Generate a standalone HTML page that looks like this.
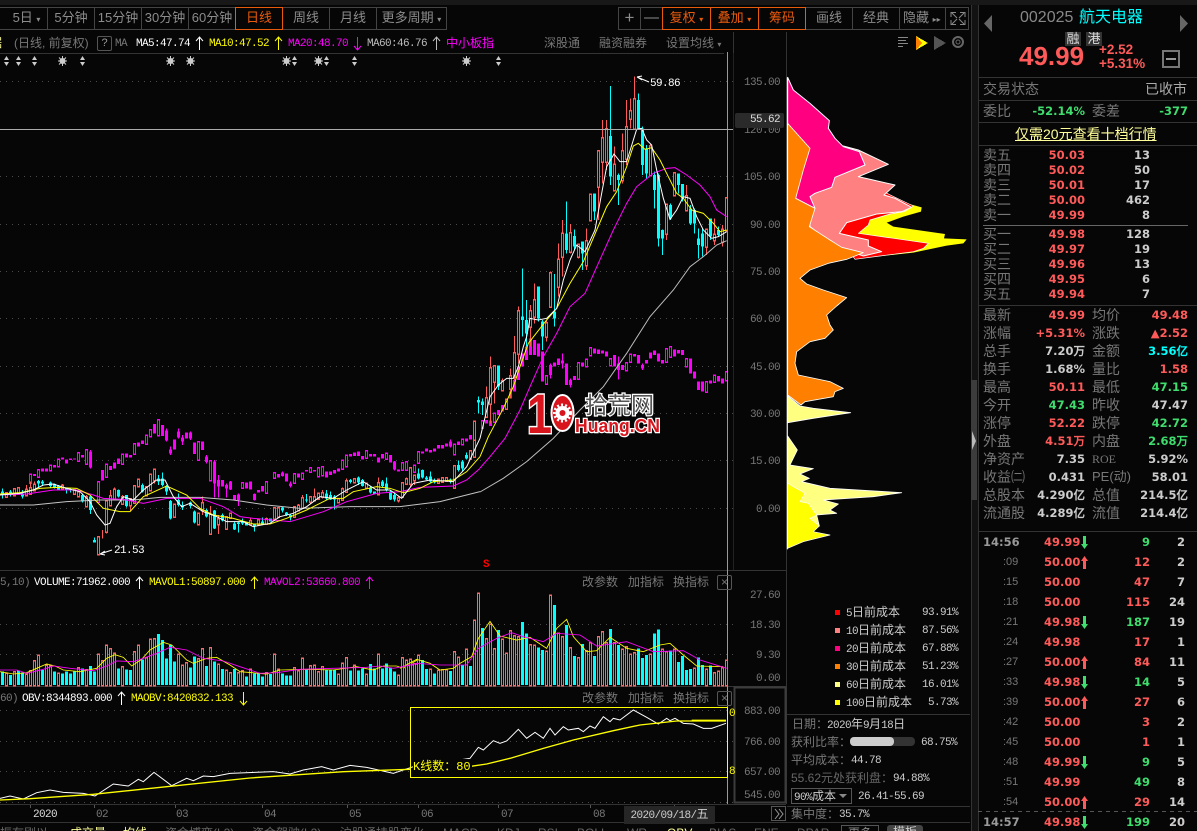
<!DOCTYPE html>
<html lang="zh"><head><meta charset="utf-8"><title>航天电器 002025</title>
<style>
html,body{margin:0;padding:0;background:#060606}
#p{position:relative;width:1197px;height:831px;overflow:hidden;background:#060606;font-family:"Liberation Sans","WenQuanYi Zen Hei","Noto Sans CJK SC",sans-serif;color:#888}
#p svg{position:absolute;left:0;top:0}
.t{position:absolute;white-space:nowrap;line-height:16px;height:16px;font-size:13px}
.m{font-family:"Liberation Mono","WenQuanYi Zen Hei",monospace;font-size:11px;letter-spacing:-.6px;margin-top:1px}
.a{margin-top:2px}
.m i{font-style:normal;font-size:12px;letter-spacing:0}
.b{font-family:"DejaVu Sans","WenQuanYi Zen Hei",sans-serif;font-weight:bold;font-size:11.5px}
.l{font-size:14px;color:#777}
.r{color:#ff5a5a}.g{color:#3fdc6e}.w{color:#ccc}.y{color:#ff0}.f{color:#f0f}.c{color:#0ff}
.btn{position:absolute;top:7px;height:21px;line-height:20px;border:1px solid #444;text-align:center;font-size:13px;color:#8c8c8c;box-sizing:content-box;white-space:nowrap}
.o{border:1px solid #e85a0c;color:#e85a0c;z-index:2}
.x{position:absolute;width:13px;height:13px;border:1px solid #555;border-radius:2px;color:#777;font-size:12px;line-height:13px;text-align:center}
</style></head><body><div id="p">
<div style="position:absolute;left:0;top:0;width:1197px;height:5px;background:#181818"></div>
<div style="position:absolute;left:971px;top:5px;width:6px;height:826px;background:#121212;border-left:1px solid #333;border-right:1px solid #333"></div>
<div style="position:absolute;left:971px;top:380px;width:6px;height:120px;background:#3c3c3c"></div>

<svg width="1197" height="831" viewBox="0 0 1197 831" fill="none">
<defs><clipPath id="cp"><rect x="0" y="54" width="727" height="516"/></clipPath>
<path id="a1" d="M295.5 413V462M319.5 305V395M331.5 290V315M343.5 270V295M367.5 292V310M391.5 298V315M403.5 260V308M415.5 240V258M439.5 262V285M451.5 225V270M463.5 210V240M523.5 315V350M595.5 342V372M607.5 310V330M631.5 345V400M655.5 358V372M679.5 352V385M691.5 342V352M751.5 365V372M775.5 362V372M799.5 358V370M823.5 325V355M835.5 325V350M883.5 322V350M895.5 318V330M907.5 295V322M931.5 292V305M943.5 292V300M955.5 282V295M967.5 280V290M1015.5 298V306M1027.5 268V298M1039.5 245V275M1063.5 238V246M1099.5 252V262M1135.5 250V282M1195.5 295V300M1207.5 250V290M1219.5 238V250M1231.5 205V250M1243.5 228V240M1315.5 240V248M1327.5 235V245M1339.5 235V242M1363.5 200V262M1411.5 155V175M1423.5 68V170M19.5 280V290M43.5 268V285M55.5 265V280M79.5 270V285M91.5 265V280M103.5 255V270M187.5 258V266M223.5 272V280M235.5 278V288M259.5 292V318"/>
<path id="a2" d="M769.5 385V480M757.5 480V515M733.5 495V510M709.5 480V530M649.5 380V420M613.5 310V375M589.5 405V490M541.5 230V315M493.5 88V175M481.5 125V145M469.5 172V265M457.5 245V330M433.5 285V360M409.5 178V275M397.5 205V275M385.5 245V350M361.5 375V450M349.5 515V585M325.5 525V560M301.5 490V545M277.5 492V560M265.5 570V650M241.5 610V710M229.5 760V800M193.5 692V740M181.5 725V770M145.5 725V850M133.5 850V920M121.5 920V955M109.5 990V1015M97.5 935V960M73.5 890V935M61.5 895V1000M49.5 985V1040M13.5 1056V1108"/>
<path id="a3" d="M91.5 225V248M115.5 212V230M151.5 198V210M175.5 180V198M235.5 160V182M259.5 152V190M295.5 248V305M319.5 195V230M367.5 165V190M403.5 133V160M439.5 108V130M451.5 92V108M475.5 62V105M595.5 128V178M631.5 185V240M727.5 250V262M799.5 248V278M823.5 220V232M883.5 224V248M907.5 222V235M931.5 205V215M955.5 205V228M967.5 202V225M1027.5 183V205M1039.5 168V198M1099.5 155V172M1159.5 162V175M1207.5 190V208M1219.5 188V208M1243.5 198V215M1255.5 158V188M1363.5 135V162M1387.5 120V132"/>
<path id="a4" d="M769.5 908V930M733.5 918V935M709.5 938V965M649.5 868V888M589.5 838V875M601.5 832V860M481.5 855V875M469.5 880V900M421.5 868V885M361.5 835V855M349.5 870V888M325.5 880V925M229.5 920V940M73.5 1032V1055M37.5 1055V1072"/>
<path id="a5" d="M19.5 342V375M43.5 338V375M79.5 345V375M91.5 335V375M103.5 305V375M115.5 288V375M139.5 318V375M151.5 320V375M175.5 342V375M235.5 325V375M259.5 332V375M295.5 285V375M307.5 305V375M319.5 258V375M331.5 268V375M343.5 282V375M367.5 322V375M403.5 278V375M415.5 258V375M439.5 295V375M451.5 240V375M463.5 238V375M535.5 285V375M547.5 318V375M559.5 310V375M595.5 298V375M607.5 268V375M631.5 265V375M655.5 315V375M679.5 333V375M691.5 340V375M715.5 340V375M727.5 335V375M751.5 330V375M799.5 340V375M823.5 285V375M835.5 330V375M883.5 325V375M895.5 335V375M907.5 297V375M931.5 320V375M943.5 318V375M955.5 338V375M967.5 322V375M1015.5 345V375M1027.5 312V375M1039.5 295V375M1063.5 318V375M1099.5 345V375M1135.5 285V375M1195.5 348V375"/>
<path id="a6" d="M7.5 295V375M19.5 303V375M31.5 300V375M43.5 313V375M55.5 288V375M91.5 330V375M115.5 333V375M127.5 332V375M139.5 332V375M163.5 277V375M175.5 294V375M199.5 270V375M223.5 183V375M235.5 102V375M259.5 238V375M271.5 195V375M283.5 268V375M307.5 240V375M319.5 282V375M331.5 215V375M343.5 230V375M355.5 232V375M391.5 256V375M403.5 258V375M439.5 276V375M451.5 108V375M475.5 222V375M487.5 232V375M511.5 265V375M535.5 295V375M559.5 275V375M571.5 250V375M595.5 232V375M607.5 217V375M619.5 250V375M643.5 250V375M667.5 270V375M679.5 262V375M691.5 285V375M703.5 280V375M751.5 285V375M787.5 270V375M799.5 278V375M823.5 270V375M883.5 327V375M919.5 330V375M943.5 340V375M955.5 336V375M967.5 325V375M979.5 303V375"/>
</defs>

<!-- grid -->
<g stroke="#4a4a4a" stroke-dasharray="1 5">
<path d="M0 81.5H733M0 176.5H733M0 224.5H733M0 271.5H733M0 318.5H733M0 366.5H733M0 413.5H733M0 460.5H733M0 508.5H733M0 624.5H733M0 654.5H733M0 710.5H733M0 741.5H733M0 771.5H733M0 802.5H733"/>
</g>

<!-- panel lines -->
<g stroke="#333" shape-rendering="crispEdges">
<path d="M733.5 53V570" stroke="#222"/>
<path d="M0 53.5H724M733.5 32V53M786.5 32V804M0 570.5H786M0 686.5H786M0 804.5H786M0 822.5H970M787 714.5H970M787 806.5H970"/>
<path d="M734.5 687.5H785.5V802.5H734.5Z" stroke="#3c3c3c" stroke-width="2"/>
<path d="M978 77.5H1197M978 100.5H1197M978 122.5H1197M978 145.5H1197M978 305.5H1197M978 531.5H1197"/>
<path d="M983 225.5H1188" stroke="#666"/>
<path d="M978 811.5H1197" stroke="#555" stroke-dasharray="4 4"/>
<path d="M30.5 805V808M94.5 805V808M175.5 805V808M262.5 805V808M347.5 805V808M418.5 805V808M498.5 805V808M590.5 805V808M674.5 805V808" stroke="#555"/>
</g>
<path d="M727.5 52V804" stroke="#999" shape-rendering="crispEdges"/>

<g clip-path="url(#cp)">
<!-- index candles left -->
<g transform="matrix(.333333 0 0 .333333 0 400)" shape-rendering="crispEdges">
<path stroke="#f0f" stroke-width="3" d="M271.5 150V205M655.5 225V292M679.5 250V292M691.5 243V270M715.5 280V318M763.5 280V302M1183.5 183V212M1351.5 118V142M511.5 140V165M535.5 85V115M547.5 105V135M571.5 95V120M619.5 165V190M847.5 215V230M871.5 245V262M499.5 85V125M643.5 180V292"/>
<path stroke="#f0f" stroke-width="9" d="M103.5 222V228M127.5 205V215M139.5 205V215M163.5 195V202M187.5 172V178M199.5 178V190M211.5 176V180M223.5 175V178M247.5 165V172M271.5 155V202M307.5 210V242M331.5 198V210M343.5 188V205M355.5 175V192M379.5 160V172M391.5 165V172M415.5 128V140M427.5 122V132M463.5 72V100M487.5 75V108M499.5 92V122M511.5 148V160M523.5 118V148M535.5 95V112M547.5 112V125M559.5 98V115M571.5 97V115M583.5 128V162M607.5 125V150M619.5 170V186M643.5 185V250M655.5 240V260M667.5 240V260M679.5 255V265M691.5 245V268M703.5 285V300M715.5 283V300M739.5 248V265M751.5 245V268M763.5 282V300M775.5 270V278M787.5 258V275M835.5 222V232M847.5 218V228M859.5 220V245M871.5 250V258M895.5 220V232M919.5 210V215M943.5 210V215M979.5 215V232M991.5 215V225M1003.5 210V220M1015.5 205V215M1051.5 162V170M1063.5 158V168M1075.5 155V168M1087.5 168V178M1111.5 162V170M1123.5 162V170M1135.5 172V188M1147.5 162V175M1171.5 165V188M1183.5 185V208M1195.5 208V214M1231.5 210V218M1267.5 155V160M1279.5 145V155M1291.5 150V158M1303.5 145V155M1315.5 135V145M1327.5 135V145M1339.5 130V140M1351.5 125V140M1375.5 125V135M1399.5 115V125M1411.5 105V118"/>
<use href="#a3" stroke="#f0f" stroke-width="9" stroke-linecap="square"/>
<use href="#a3" stroke="#060606" stroke-width="3"/>
</g>
<!-- index candles right -->
<g transform="matrix(.333333 0 0 .333333 470 70)" shape-rendering="crispEdges">
<path stroke="#f0f" stroke-width="3" d="M445.5 860V928M517.5 880V900M277.5 850V895M241.5 880V925M301.5 925V952"/>
<path stroke="#f0f" stroke-width="9" d="M49.5 1050V1060M61.5 1052V1068M85.5 1020V1035M97.5 1005V1025M109.5 990V1012M121.5 965V985M133.5 930V965M145.5 890V930M157.5 850V890M169.5 830V870M181.5 805V855M193.5 810V855M205.5 820V860M217.5 845V935M241.5 885V915M253.5 878V890M265.5 865V885M277.5 872V880M289.5 880V945M301.5 930V945M313.5 918V930M337.5 878V890M373.5 835V850M385.5 838V852M397.5 842V850M409.5 845V860M433.5 855V890M445.5 880V900M457.5 885V900M493.5 852V860M505.5 855V880M517.5 885V895M529.5 870V880M541.5 848V865M553.5 842V855M565.5 850V875M577.5 870V880M613.5 838V860M625.5 840V850M637.5 840V855M661.5 865V910M673.5 905V925M685.5 935V960M697.5 935V965M721.5 932V940M745.5 918V935M757.5 925V940"/>
<use href="#a4" stroke="#f0f" stroke-width="9" stroke-linecap="square"/>
<use href="#a4" stroke="#060606" stroke-width="3"/>
</g>

<!-- stock candles left -->
<g transform="matrix(.333333 0 0 .333333 0 400)" shape-rendering="crispEdges">
<path stroke="#ff5a5a" stroke-width="3" d="M19.5 278V292M43.5 265V288M55.5 262V282M79.5 255V290M91.5 245V285M103.5 245V272M187.5 252V270M223.5 270V282M235.5 275V290M259.5 285V320M295.5 410V465M307.5 390V415M319.5 300V400M331.5 270V320M343.5 262V298M367.5 285V315M391.5 295V335M403.5 258V310M415.5 235V260M439.5 260V290M451.5 222V275M463.5 205V250M523.5 312V352M595.5 340V375M607.5 290V345M631.5 318V402M655.5 345V402M679.5 350V388M691.5 340V355M751.5 352V374M775.5 360V375M799.5 352V372M823.5 322V358M835.5 322V352M883.5 318V352M895.5 312V332M907.5 285V325M931.5 290V310M943.5 265V302M955.5 278V300M967.5 270V295M1015.5 295V308M1027.5 262V300M1039.5 235V278M1063.5 235V248M1099.5 250V265M1135.5 232V285M1195.5 290V308M1207.5 248V292M1219.5 232V252M1231.5 202V260M1243.5 225V255M1315.5 238V250M1327.5 232V248M1339.5 232V245M1363.5 198V264M1411.5 150V180M1423.5 65V172"/>
<use href="#a1" stroke="#ff5a5a" stroke-width="9" stroke-linecap="square"/>
<use href="#a1" stroke="#060606" stroke-width="3"/>
<path stroke="#0ff" stroke-width="3" d="M7.5 265V295M31.5 270V290M67.5 270V295M115.5 240V262M127.5 240V258M151.5 245V262M163.5 250V265M175.5 255V272M199.5 262V280M211.5 265V278M247.5 280V308M271.5 285V342M283.5 412V428M355.5 268V292M379.5 285V322M427.5 250V278M475.5 225V255M487.5 217V260M499.5 255V285M511.5 300V358M535.5 280V320M547.5 305V330M571.5 305V325M583.5 332V370M619.5 325V352M643.5 330V387M667.5 340V365M703.5 365V390M715.5 365V398M727.5 355V375M763.5 370V395M787.5 352V372M847.5 320V338M859.5 336V348M871.5 342V362M919.5 282V308M979.5 270V300M991.5 275V300M1003.5 285V328M1051.5 237V250M1075.5 230V255M1087.5 237V260M1111.5 258V280M1147.5 240V262M1159.5 232V275M1171.5 272V300M1183.5 280V305M1255.5 205V238M1267.5 208V235M1279.5 228V240M1291.5 215V248M1303.5 235V250M1351.5 235V250M1375.5 182V215M1387.5 180V215M1399.5 158V178M1435.5 0V36"/>
<path stroke="#0ff" stroke-width="9" d="M7.5 275V285M31.5 275V285M67.5 280V290M115.5 243V250M127.5 245V250M151.5 248V258M163.5 252V262M175.5 258V268M199.5 265V270M211.5 268V272M247.5 285V305M271.5 290V330M283.5 420V428M355.5 270V290M379.5 285V318M427.5 255V275M475.5 235V245M487.5 235V255M499.5 258V275M511.5 303V355M535.5 300V315M547.5 315V322M571.5 308V318M583.5 335V368M619.5 330V350M643.5 332V385M667.5 345V362M703.5 370V388M715.5 368V372M727.5 365V370M739.5 368V376M763.5 372V378M787.5 365V370M811.5 355V365M847.5 322V332M859.5 338V345M871.5 345V352M919.5 298V302M979.5 280V295M991.5 285V298M1003.5 290V298M1051.5 240V246M1075.5 232V248M1087.5 240V258M1111.5 262V278M1123.5 275V282M1147.5 245V258M1159.5 250V272M1171.5 275V298M1183.5 285V298M1255.5 220V235M1267.5 210V232M1279.5 232V238M1291.5 230V245M1303.5 240V248M1351.5 238V246M1375.5 195V210M1387.5 185V205M1399.5 165V175"/>
</g>
<!-- stock candles right -->
<g transform="matrix(.333333 0 0 .333333 470 70)" shape-rendering="crispEdges">
<path stroke="#ff5a5a" stroke-width="3" d="M769.5 382V482M757.5 465V530M733.5 445V525M709.5 475V555M649.5 345V425M613.5 308V378M589.5 400V510M541.5 220V320M493.5 20V180M481.5 85V175M469.5 90V285M457.5 190V340M433.5 230V360M409.5 150V300M397.5 150V340M385.5 240V450M361.5 375V455M349.5 475V600M325.5 525V565M301.5 462V550M277.5 450V620M265.5 520V680M241.5 605V712M229.5 750V815M193.5 640V760M181.5 705V830M145.5 710V880M133.5 798V930M121.5 895V985M109.5 985V1020M97.5 925V965M73.5 885V1000M61.5 860V1060M49.5 950V1040M13.5 1056V1110"/>
<use href="#a2" stroke="#ff5a5a" stroke-width="9" stroke-linecap="square"/>
<use href="#a2" stroke="#060606" stroke-width="3"/>
<path stroke="#0ff" stroke-width="3" d="M745.5 470V500M721.5 445V510M697.5 475V560M685.5 475V565M673.5 415V490M661.5 405V465M637.5 342V395M625.5 310V370M601.5 400V450M577.5 478V555M565.5 310V530M553.5 305V415M529.5 225V325M517.5 170V315M505.5 70V180M445.5 310V405M421.5 48V345M373.5 370V450M337.5 515V600M313.5 478V540M289.5 395V550M253.5 612V770M217.5 750V840M205.5 650V755M169.5 690V830M157.5 595V800M85.5 887V960M37.5 985V1035M25.5 980V1030"/>
<path stroke="#0ff" stroke-width="9" d="M745.5 480V495M721.5 445V500M697.5 490V530M685.5 505V525M673.5 420V460M661.5 415V460M637.5 342V385M625.5 310V345M601.5 405V445M577.5 480V505M565.5 315V505M553.5 315V360M529.5 235V310M517.5 175V285M505.5 90V175M445.5 315V330M421.5 198V320M373.5 370V425M337.5 515V550M313.5 498V530M289.5 490V540M253.5 725V745M217.5 755V800M205.5 650V745M169.5 750V790M157.5 740V750M85.5 887V950M37.5 995V1005M25.5 990V997"/>
</g>

<!-- MA lines -->
<g transform="matrix(.333333 0 0 .333333 0 400)" stroke-width="3">
<path stroke="#c4c4c4" d="M0 315L100 315 200 305 300 300 400 300 480 292 600 292 700 300 800 315 900 325 1050 320 1200 320 1320 305 1440 275"/>
<path stroke="#f0f" d="M0 285L80 282 160 270 230 270 280 285 310 295 370 298 430 310 500 295 600 295 670 320 720 350 760 355 870 365 970 335 1040 305 1130 280 1200 275 1260 262 1360 258 1400 240 1440 205"/>
<path stroke="#ff0" d="M0 282L60 278 120 265 170 262 230 265 270 285 310 325 360 335 390 335 430 290 500 258 560 285 600 325 640 345 700 355 760 372 810 372 860 355 920 330 990 295 1030 295 1060 275 1130 260 1170 265 1210 278 1260 265 1300 245 1360 240 1400 215 1440 170"/>
<path stroke="#fff" d="M0 285L60 280 100 270 130 255 160 252 200 265 240 275 270 305 290 345 315 375 330 370 350 320 370 290 400 300 430 270 470 240 495 240 520 290 545 320 570 310 610 335 650 350 680 365 730 365 760 380 810 370 840 350 880 340 920 320 960 290 1000 295 1040 270 1090 245 1130 270 1170 270 1205 295 1240 250 1290 240 1360 245 1400 200 1440 115"/>
</g>
<g transform="matrix(.333333 0 0 .333333 470 70)" stroke-width="3">
<path stroke="#bdbdbd" d="M30 1266L100 1225 170 1175 250 1105 330 1020 400 950 470 850 540 740 610 660 660 590 700 560 740 525 770 512"/>
<path stroke="#f0f" d="M30 1194L60 1160 105 1105 150 1020 180 950 220 860 260 790 300 710 345 670 385 580 430 480 470 400 500 350 550 310 590 295 615 293 650 315 690 345 720 380 740 420 770 440"/>
<path stroke="#ff0" d="M30 1160L55 1100 100 1015 130 950 150 890 175 820 230 750 260 715 300 640 340 575 380 480 410 410 440 365 470 290 490 228 505 220 525 238 545 233 570 270 595 320 620 370 640 385 665 420 700 430 730 460 750 485 770 480"/>
<path stroke="#fff" d="M30 1105L60 980 85 945 110 925 130 925 145 890 160 830 170 800 180 745 205 750 230 745 260 715 280 630 300 570 320 525 345 545 375 480 395 370 410 290 432 252 450 275 470 275 490 210 500 178 515 175 530 210 545 225 560 300 580 385 600 448 620 420 640 380 660 385 680 440 700 480 725 505 745 500 770 485"/>
</g>
</g>

<!-- crosshair -->
<path d="M0 129.5H733" stroke="#aaa" shape-rendering="crispEdges"/>

<!-- hi/lo arrows -->
<g stroke="#fff"><path d="M637 77L649 82M637 77L642 76M637 77L642 80" /><path d="M100 554L112 550M100 554L105 551M100 554L105 555"/></g>

<!-- signal markers -->
<g fill="#ccc">
<path d="M6.5 56l2.5 4h-5zM6.5 66l2.5-4h-5zM18.5 56l2.5 4h-5zM18.5 66l2.5-4h-5zM34.5 56l2.5 4h-5zM34.5 66l2.5-4h-5zM82.5 56l2.5 4h-5zM82.5 66l2.5-4h-5zM294.5 56l2.5 4h-5zM294.5 66l2.5-4h-5zM326.5 56l2.5 4h-5zM326.5 66l2.5-4h-5zM354.5 56l2.5 4h-5zM354.5 66l2.5-4h-5zM498.5 56l2.5 4h-5zM498.5 66l2.5-4h-5z"/>
<g><circle cx="62.5" cy="61" r="3"/><circle cx="170.5" cy="61" r="3"/><circle cx="190.5" cy="61" r="3"/><circle cx="286.5" cy="61" r="3"/><circle cx="318.5" cy="61" r="3"/><circle cx="466.5" cy="61" r="3"/></g>
<path stroke="#ccc" d="M62.5 56V66M58 61H67M59 57.5L66 64.5M66 57.5L59 64.5M170.5 56V66M166 61H175M167 57.5L174 64.5M174 57.5L167 64.5M190.5 56V66M186 61H195M187 57.5L194 64.5M194 57.5L187 64.5M286.5 56V66M282 61H291M283 57.5L290 64.5M290 57.5L283 64.5M318.5 56V66M314 61H323M315 57.5L322 64.5M322 57.5L315 64.5M466.5 56V66M462 61H471M463 57.5L470 64.5M470 57.5L463 64.5"/>
</g>

<!-- legend arrows -->
<g fill="none">
<path stroke="#fff" d="M199.5 37V50M196 41L199.5 37 203 41M139.5 577V589M136 581L139.5 577 143 581M121.5 692V705M118 696L121.5 692 125 696"/>
<path stroke="#ff0" d="M278.5 37V50M275 41L278.5 37 282 41M254.5 577V589M251 581L254.5 577 258 581M243.5 692V705M240 701L243.5 705 247 701"/>
<path stroke="#f0f" d="M357.5 37V50M354 46L357.5 50 361 46M369.5 577V589M366 581L369.5 577 373 581"/>
<path stroke="#bbb" d="M436.5 37V50M433 41L436.5 37 440 41"/>
</g>

<!-- Volume bars left -->
<g transform="matrix(.333333 0 0 .333333 0 560)" shape-rendering="crispEdges">
<use href="#a5" stroke="#f06c6c" stroke-width="9" stroke-linecap="square"/>
<use href="#a5" stroke="#060606" stroke-width="3"/>
<path stroke="#0ff" stroke-width="9" d="M7.5 335V375M31.5 345V375M55.5 332V375M67.5 338V375M127.5 330V375M163.5 335V375M187.5 340V375M199.5 335V375M211.5 340V375M223.5 335V375M247.5 325V375M271.5 318V375M283.5 335V375M355.5 325V375M379.5 328V375M391.5 330V375M427.5 298V375M475.5 222V375M487.5 240V375M499.5 295V375M511.5 255V375M523.5 305V375M571.5 322V375M583.5 290V375M619.5 318V375M643.5 305V375M667.5 327V375M703.5 327V375M739.5 350V375M763.5 340V375M775.5 340V375M787.5 350V375M811.5 342V375M847.5 340V375M859.5 347V375M871.5 347V375M919.5 328V375M979.5 330V375M991.5 328V375M1003.5 330V375M1051.5 332V375M1075.5 332V375M1087.5 325V375M1111.5 312V375M1123.5 325V375M1147.5 325V375M1159.5 310V375M1171.5 322V375M1183.5 335V375"/>
<path stroke="#ff0" stroke-width="2.6" fill="none" shape-rendering="auto" d="M0 335L40 342 80 338 110 325 140 312 165 318 190 330 240 335 290 325 320 295 345 284 370 292 395 318 425 298 450 270 490 247 515 255 560 300 580 310 620 295 650 292 690 315 720 335 800 342 840 330 920 328 1000 330 1070 320 1120 330 1150 318 1190 318 1210 325 1260 295"/>
<path stroke="#f0f" stroke-width="2.6" fill="none" shape-rendering="auto" d="M0 330L50 330 80 340 130 328 160 318 210 325 280 332 320 318 350 303 400 305 430 295 470 280 510 262 560 270 610 295 670 303 720 320 780 340 830 338 900 328 1000 325 1100 322 1140 318 1180 325 1220 318 1260 312"/>
</g>
<!-- Volume bars right -->
<g transform="matrix(.333333 0 0 .333333 400 560)" shape-rendering="crispEdges">
<use href="#a6" stroke="#f06c6c" stroke-width="9" stroke-linecap="square"/>
<use href="#a6" stroke="#060606" stroke-width="3"/>
<path stroke="#0ff" stroke-width="9" d="M67.5 300V375M79.5 327V375M103.5 340V375M151.5 333V375M187.5 315V375M211.5 318V375M247.5 204V375M295.5 210V375M367.5 186V375M379.5 220V375M415.5 262V375M427.5 270V375M463.5 135V375M499.5 195V375M523.5 288V375M547.5 252V375M583.5 288V375M631.5 207V375M655.5 255V375M715.5 265V375M727.5 294V375M739.5 285V375M763.5 220V375M775.5 208V375M811.5 272V375M835.5 306V375M847.5 288V375M859.5 330V375M871.5 327V375M895.5 292V375M907.5 315V375M931.5 316V375"/>
<path stroke="#ff0" stroke-width="2.6" fill="none" shape-rendering="auto" d="M0 325L50 298 90 310 120 330 160 325 180 310 215 290 235 235 270 184 300 228 350 240 390 232 440 265 470 205 500 178 520 230 560 275 590 272 630 232 680 265 730 275 780 255 810 250 850 285 890 318 970 320"/>
<path stroke="#f0f" stroke-width="2.6" fill="none" shape-rendering="auto" d="M0 322L50 310 120 315 200 315 235 265 290 235 335 218 370 230 430 245 470 220 540 225 590 258 680 245 760 275 850 272 900 300 980 325"/>
</g>

<!-- OBV -->
<g transform="matrix(.333333 0 0 .333333 0 560)" stroke-width="3" fill="none">
<path stroke="#fff" d="M0 715L30 708 70 717 110 698 150 690 190 697 250 700 285 708 340 672 385 678 415 658 430 665 462 637 515 677 560 655 580 662 610 648 640 650 690 640 820 635 870 642 910 630 965 620 1000 630 1050 616 1100 622 1180 640 1240 620"/>
<path stroke="#ff0" stroke-width="4" d="M0 720L90 716 280 703 500 680 750 654 1030 635 1230 628"/>
</g>
<g transform="matrix(.333333 0 0 .333333 400 560)" stroke-width="3" fill="none">
<path stroke="#fff" d="M165 602L190 598 210 595 235 562 250 570 280 542 300 550 320 543 355 508 380 535 405 517 430 535 450 505 465 525 490 500 505 510 535 505 550 515 570 498 585 505 610 470 630 485 640 475 660 480 700 450 740 472 775 492 800 475 810 482 825 475 850 490 880 492 910 505 935 505 978 490"/>
<path stroke="#ff0" stroke-width="4" d="M205 620L260 612 330 595 430 565 520 540 640 512 720 495 830 483 978 483M875 481H978"/>
</g>
<rect x="410.5" y="707.5" width="317" height="70" fill="none" stroke="#ff0" shape-rendering="crispEdges"/>

<!-- chip distribution -->
<g transform="matrix(.333333 0 0 .333333 780 70)" stroke-linejoin="round">
<path fill="#ff0" d="M330 380L388 402 425 412 423 425 370 440 320 458 340 470 495 492 492 505 560 508 550 520 500 527 400 548 230 566 100 400Z"/>
<path fill="#f00" stroke="#fff" stroke-width="2" d="M300 360L400 408 372 425 330 432 270 450 265 465 235 490 445 520 430 535 400 545 300 558 225 568 120 420Z"/>
<path fill="#ff8080" stroke="#fff" stroke-width="3" d="M190 228L235 240 325 283 235 320 345 345 312 375 345 385 395 412 365 425 290 432 200 458 178 490 265 510 265 528 305 545 250 558 170 530 90 470 90 380Z"/>
<path fill="#ff0080" stroke="#fff" stroke-width="3" d="M23 22L40 60 90 100 148 152 145 175 165 205 190 230 238 245 255 285 165 322 155 352 105 370 90 380 105 415 47 385 23 300Z"/>
<path fill="#ff8000" stroke="#fff" stroke-width="2.5" d="M23 160L90 235 70 300 47 385 105 415 88 470 150 510 185 532 250 548 200 568 145 580 90 600 60 625 80 642 130 660 200 683 170 708 140 735 150 765 160 780 135 805 90 815 50 845 45 880 55 915 150 935 190 955 165 965 160 980 75 995 63 1005 23 975Z"/>
<path fill="#ffff80" stroke="#fff" stroke-width="2.5" d="M23 978L60 1008 100 1015 212 1028 100 1045 23 1058ZM23 1098L52 1140 30 1185 100 1196 60 1212 88 1225 65 1235 150 1255 365 1268 280 1280 130 1290 175 1302 150 1320 170 1330 110 1335 118 1368 60 1400 23 1420Z"/>
<path fill="#ff0" stroke="#fff" stroke-width="2" d="M23 1240L75 1270 60 1295 85 1300 110 1335 90 1345 118 1368 100 1385 150 1395 70 1415 23 1435Z"/>
<path stroke="#fff" stroke-width="3" d="M22 22V1438"/>
</g>

<!-- chip toolbar icons -->
<g shape-rendering="crispEdges">
<path stroke="#888" d="M898 37.5H908M898 40.5H906M898 43.5H908M898 46.5H903"/>
<path fill="#ff8000" d="M916 36V50L922 43Z"/><path fill="#ff0" d="M916 36L928 43 916 50 922 43Z"/>
<path fill="#555" d="M934 36V50L946 43Z"/>
</g>
<circle cx="958" cy="42" r="5" stroke="#666" stroke-width="2"/><circle cx="958" cy="42" r="2" stroke="#666"/>
<!-- fullscreen icon -->
<path stroke="#888" d="M951 17V12.5H956M960 12.5H965V17M951 20V24.5H956M960 24.5H965V20M952 13L957 18M964 13L959 18M952 24L957 19M964 24L959 19"/>
<!-- scroll handle arrow -->
<path fill="#bbb" d="M972 431L976 441 972 450Z"/>
<!-- right panel triangles -->
<path fill="#666" d="M992 15V32L984 23.5ZM1180 15V32L1188 23.5Z"/>
<!-- minus box -->
<rect x="1163" y="51" width="16" height="16" stroke="#777" stroke-width="2"/><path d="M1166 59H1176" stroke="#999" stroke-width="2"/>
<!-- sq legend -->
<g shape-rendering="crispEdges">
<rect x="835" y="610" width="5" height="5" fill="#f00"/><rect x="835" y="628" width="5" height="5" fill="#ff8080"/><rect x="835" y="646" width="5" height="5" fill="#ff0080"/><rect x="835" y="664" width="5" height="5" fill="#ff8000"/><rect x="835" y="682" width="5" height="5" fill="#ffff80"/><rect x="835" y="700" width="5" height="5" fill="#ff0"/>
</g>
<rect x="850" y="737" width="65" height="9" rx="4" fill="#333"/><rect x="850" y="737" width="44" height="9" rx="4" fill="#ccc"/>
<rect x="791.5" y="788.5" width="60" height="15" stroke="#555"/>
<path fill="#888" d="M839 794h8l-4 4z"/>
<path stroke="#555" d="M771.5 806.5h14v14h-14z"/><path stroke="#999" d="M775 809l4 5-4 5M779 809l4 5-4 5"/>

<!-- trade arrows -->
<g stroke-width="3" fill="#3fdc6e">
<path stroke="#3fdc6e" d="M1084.5 536V546M1084.5 616V626M1084.5 676V686M1084.5 756V766M1084.5 816V826"/>
<path stroke="none" d="M1081 544H1088L1084.5 549ZM1081 624H1088L1084.5 629ZM1081 684H1088L1084.5 689ZM1081 764H1088L1084.5 769ZM1081 824H1088L1084.5 829Z"/>
</g>
<g stroke-width="3" fill="#ff5a5a">
<path stroke="#ff5a5a" d="M1084.5 560V569M1084.5 660V669M1084.5 700V709M1084.5 800V809"/>
<path stroke="none" d="M1081 561H1088L1084.5 556ZM1081 661H1088L1084.5 656ZM1081 701H1088L1084.5 696ZM1081 801H1088L1084.5 796Z"/>
</g>

<!-- watermark -->
<g>
<text x="527" y="433" font-family="Liberation Sans" font-weight="bold" font-size="56" textLength="25" lengthAdjust="spacingAndGlyphs" fill="#d8141c" stroke="#fff" stroke-width="3" paint-order="stroke">1</text>
<ellipse cx="562.5" cy="413" rx="11" ry="18" fill="#d8141c" stroke="#fff" stroke-width="2"/>
<circle cx="562.5" cy="413" r="7" fill="#fff"/><circle cx="562.5" cy="413" r="8" fill="none" stroke="#fff" stroke-width="3" stroke-dasharray="2 2"/><circle cx="562.5" cy="413" r="3" fill="#d8141c"/>
<text x="585" y="413" font-family="WenQuanYi Zen Hei,Noto Sans CJK SC,sans-serif" font-size="23" fill="#555" stroke="#fff" stroke-width="2.5" paint-order="stroke">拾荒网</text>
<text x="575" y="432" font-family="Liberation Sans" font-size="18" font-weight="bold" textLength="85" lengthAdjust="spacingAndGlyphs" fill="#d8141c" stroke="#fff" stroke-width="2.5" paint-order="stroke">Huang.CN</text>
</g>
</svg>

<!-- toolbar -->
<div class="btn" style="left:-1px;width:47px;text-indent:6px"><span>5日 <span style="font-size:8px">▾</span></span></div>
<div class="btn" style="left:47px;width:46px">5分钟</div>
<div class="btn" style="left:94px;width:46px">15分钟</div>
<div class="btn" style="left:141px;width:46px">30分钟</div>
<div class="btn" style="left:188px;width:46px">60分钟</div>
<div class="btn o" style="left:235px;width:46px">日线</div>
<div class="btn" style="left:282px;width:46px">周线</div>
<div class="btn" style="left:329px;width:46px">月线</div>
<div class="btn" style="left:376px;width:69px">更多周期 <span style="font-size:8px">▾</span></div>
<div class="btn" style="left:618px;width:21px;font-size:17px">+</div>
<div class="btn" style="left:640px;width:21px;font-size:15px">—</div>
<div class="btn o" style="left:662px;width:47px">复权 <span style="font-size:8px">▾</span></div>
<div class="btn o" style="left:710px;width:47px">叠加 <span style="font-size:8px">▾</span></div>
<div class="btn o" style="left:758px;width:46px">筹码</div>
<div class="btn" style="left:805px;width:46px">画线</div>
<div class="btn" style="left:852px;width:46px">经典</div>
<div class="btn" style="left:899px;width:45px;text-align:left;text-indent:3px">隐藏 <span style="font-size:8px">▸▸</span></div>
<div class="btn" style="left:945px;width:22px"></div>

<!-- row 2 -->
<span class="t" style="left:-10px;top:35px;font-size:12px;color:#ffff99">据</span>
<span class="t" style="left:14px;top:35px;font-size:12px;color:#777">(日线, 前复权)</span>
<span class="t" style="left:97px;top:36px;width:13px;height:13px;line-height:13px;border:1px solid #555;border-radius:2px;text-align:center;font-size:11px;color:#999">?</span>
<span class="t m" style="left:115px;top:35px;color:#777">MA</span>
<span class="t m" style="left:136px;top:35px;color:#fff">MA5:47.74</span>
<span class="t m y" style="left:209px;top:35px">MA10:47.52</span>
<span class="t m f" style="left:288px;top:35px">MA20:48.70</span>
<span class="t m" style="left:367px;top:35px;color:#bbb">MA60:46.76</span>
<span class="t f" style="left:446px;top:35px;font-size:12px">中小板指</span>
<span class="t" style="left:544px;top:35px;font-size:12px;color:#777">深股通</span>
<span class="t" style="left:599px;top:35px;font-size:12px;color:#777">融资融券</span>
<span class="t" style="left:666px;top:35px;font-size:12px;color:#777">设置均线 <span style="font-size:8px">▾</span></span>

<!-- axis main -->
<span class="t m a" style="right:417px;top:73px;color:#777">135.00</span>
<span class="t m a" style="right:417px;top:121px;color:#777">120.00</span>
<span class="t m a" style="right:417px;top:168px;color:#777">105.00</span>
<span class="t m a" style="right:417px;top:216px;color:#777">90.00</span>
<span class="t m a" style="right:417px;top:263px;color:#777">75.00</span>
<span class="t m a" style="right:417px;top:310px;color:#777">60.00</span>
<span class="t m a" style="right:417px;top:358px;color:#777">45.00</span>
<span class="t m a" style="right:417px;top:405px;color:#777">30.00</span>
<span class="t m a" style="right:417px;top:452px;color:#777">15.00</span>
<span class="t m a" style="right:417px;top:500px;color:#777">0.00</span>
<span class="t m" style="left:735px;top:113px;margin-top:0;width:45px;height:15px;line-height:15px;padding-right:4px;text-align:right;background:#2a2a2a;border-radius:2px;color:#ddd">55.62</span>
<span class="t m" style="left:650px;top:75px;color:#fff">59.86</span>
<span class="t m" style="left:114px;top:542px;color:#fff">21.53</span>
<span class="t m" style="left:483px;top:556px;color:#f00;font-weight:bold">S</span>

<!-- volume header -->
<span class="t m" style="left:0;top:574px;color:#777">5,10)</span>
<span class="t m" style="left:34px;top:574px;color:#fff">VOLUME:71962.000</span>
<span class="t m y" style="left:149px;top:574px">MAVOL1:50897.000</span>
<span class="t m f" style="left:264px;top:574px">MAVOL2:53660.800</span>
<span class="t" style="left:582px;top:574px;font-size:12px;color:#777">改参数</span>
<span class="t" style="left:628px;top:574px;font-size:12px;color:#777">加指标</span>
<span class="t" style="left:673px;top:574px;font-size:12px;color:#777">换指标</span>
<span class="x" style="left:717px;top:575px">×</span>
<span class="t m a" style="right:417px;top:586px;color:#777">27.60</span>
<span class="t m a" style="right:417px;top:616px;color:#777">18.30</span>
<span class="t m a" style="right:417px;top:646px;color:#777">9.30</span>
<span class="t m a" style="right:417px;top:669px;color:#777">0.00</span>

<!-- OBV header -->
<span class="t m" style="left:0;top:690px;color:#777">60)</span>
<span class="t m" style="left:22px;top:690px;color:#fff">OBV:8344893.000</span>
<span class="t m y" style="left:131px;top:690px">MAOBV:8420832.133</span>
<span class="t" style="left:582px;top:690px;font-size:12px;color:#777">改参数</span>
<span class="t" style="left:628px;top:690px;font-size:12px;color:#777">加指标</span>
<span class="t" style="left:673px;top:690px;font-size:12px;color:#777">换指标</span>
<span class="x" style="left:717px;top:691px">×</span>
<span class="t m a" style="right:417px;top:702px;color:#777">883.00</span>
<span class="t m a" style="right:417px;top:733px;color:#777">766.00</span>
<span class="t m a" style="right:417px;top:763px;color:#777">657.00</span>
<span class="t m a" style="right:417px;top:786px;color:#777">545.00</span>
<span class="t y" style="left:413px;top:759px;font-size:12px;background:#060606;padding-right:1px;font-family:'Liberation Mono','WenQuanYi Zen Hei',monospace">K线数：80</span>
<span class="t m y" style="left:729px;top:705px">0</span>
<span class="t m y" style="left:729px;top:763px">8</span>

<!-- dates -->
<span class="t m" style="left:33px;top:806px;color:#ddd">2020</span>
<span class="t m" style="left:96px;top:806px;color:#777">02</span>
<span class="t m" style="left:176px;top:806px;color:#777">03</span>
<span class="t m" style="left:264px;top:806px;color:#777">04</span>
<span class="t m" style="left:349px;top:806px;color:#777">05</span>
<span class="t m" style="left:421px;top:806px;color:#777">06</span>
<span class="t m" style="left:501px;top:806px;color:#777">07</span>
<span class="t m" style="left:593px;top:806px;color:#777">08</span>
<span class="t m" style="left:624px;top:806px;margin-top:0;width:91px;height:18px;line-height:18px;background:#262626;text-align:center;color:#ccc">2020/09/18/<i>五</i></span>

<!-- bottom tabs -->
<span class="t" style="left:0;top:825px;font-size:12px;color:#666">振有刚以</span>
<span class="t" style="left:70px;top:825px;font-size:12px;color:#ffff99">成交量</span>
<span class="t" style="left:123px;top:825px;font-size:12px;color:#ffff99">均线</span>
<span class="t" style="left:165px;top:825px;font-size:12px;color:#666">资金博弈(L2)</span>
<span class="t" style="left:252px;top:825px;font-size:12px;color:#666">资金驾驶(L2)</span>
<span class="t" style="left:340px;top:825px;font-size:12px;color:#666">沪股通持股变化</span>
<span class="t" style="left:443px;top:825px;font-size:12px;color:#666">MACD</span>
<span class="t" style="left:497px;top:825px;font-size:12px;color:#666">KDJ</span>
<span class="t" style="left:538px;top:825px;font-size:12px;color:#666">RSI</span>
<span class="t" style="left:577px;top:825px;font-size:12px;color:#666">BOLL</span>
<span class="t" style="left:627px;top:825px;font-size:12px;color:#666">WR</span>
<span class="t" style="left:667px;top:825px;font-size:12px;color:#ffff99">OBV</span>
<span class="t" style="left:709px;top:825px;font-size:12px;color:#666">BIAS</span>
<span class="t" style="left:754px;top:825px;font-size:12px;color:#666">ENE</span>
<span class="t" style="left:797px;top:825px;font-size:12px;color:#666">DPAR</span>
<span class="t" style="left:841px;top:825px;font-size:12px;color:#888;border:1px solid #555;height:14px;line-height:14px;padding:0 6px">更多</span>
<span class="t" style="left:887px;top:825px;font-size:12px;color:#ccc;background:#444;height:14px;line-height:14px;padding:0 6px;border-radius:3px">模板</span>

<!-- chip panel text -->
<span class="t m w" style="left:846px;top:604px">5<i>日前成本</i></span><span class="t m w" style="right:239px;top:604px">93.91%</span>
<span class="t m w" style="left:846px;top:622px">10<i>日前成本</i></span><span class="t m w" style="right:239px;top:622px">87.56%</span>
<span class="t m w" style="left:846px;top:640px">20<i>日前成本</i></span><span class="t m w" style="right:239px;top:640px">67.88%</span>
<span class="t m w" style="left:846px;top:658px">30<i>日前成本</i></span><span class="t m w" style="right:239px;top:658px">51.23%</span>
<span class="t m w" style="left:846px;top:676px">60<i>日前成本</i></span><span class="t m w" style="right:239px;top:676px">16.01%</span>
<span class="t m w" style="left:846px;top:694px">100<i>日前成本</i></span><span class="t m w" style="right:239px;top:694px">5.73%</span>
<span class="t" style="left:792px;top:716px;font-size:12px;color:#777">日期：</span><span class="t m w" style="left:827px;top:716px">2020<i>年</i>9<i>月</i>18<i>日</i></span>
<span class="t" style="left:791px;top:734px;font-size:12px;color:#777">获利比率：</span><span class="t m w" style="left:921px;top:734px">68.75%</span>
<span class="t" style="left:791px;top:752px;font-size:12px;color:#777">平均成本：</span><span class="t m w" style="left:851px;top:752px">44.78</span>
<span class="t" style="left:791px;top:770px;font-size:12px;color:#666">55.62元处获利盘：</span><span class="t m w" style="left:893px;top:770px">94.88%</span>
<span class="t m w" style="left:794px;top:788px">90%<i>成本</i></span><span class="t m w" style="left:858px;top:788px">26.41-55.69</span>
<span class="t" style="left:791px;top:806px;font-size:12px;color:#777">集中度：</span><span class="t m w" style="left:839px;top:806px">35.7%</span>

<!-- right panel header -->
<span class="t" style="left:1020px;top:9px;font-size:16px;line-height:18px;height:18px;color:#888">002025</span>
<span class="t c" style="left:1079px;top:9px;font-size:16px;line-height:18px;height:18px">航天电器</span>
<span class="t" style="left:1065px;top:32px;width:16px;height:14px;line-height:14px;background:#333;color:#ddd;font-size:13px;text-align:center">融</span>
<span class="t" style="left:1086px;top:32px;width:16px;height:14px;line-height:14px;background:#333;color:#ddd;font-size:13px;text-align:center">港</span>
<span class="t r" style="left:1019px;top:42px;font-size:26px;line-height:28px;height:28px;font-weight:bold;letter-spacing:0">49.99</span>
<span class="t r" style="left:1099px;top:42px;font-size:13.5px;font-weight:bold">+2.52</span>
<span class="t r" style="left:1099px;top:56px;font-size:13.5px;font-weight:bold">+5.31%</span>
<span class="t l" style="left:983px;top:81px">交易状态</span><span class="t" style="right:10px;top:81px;font-size:14px;color:#aaa">已收市</span>
<span class="t l" style="left:983px;top:103px">委比</span><span class="t b g" style="right:112px;top:103px">-52.14%</span><span class="t l" style="left:1092px;top:103px">委差</span><span class="t b g" style="right:9px;top:103px">-377</span>
<span class="t" style="left:1015px;top:126px;font-size:14px;color:#ffff99;text-decoration:underline">仅需20元查看十档行情</span>

<span class="t l" style="left:983px;top:147px">卖五</span><span class="t b r" style="right:112px;top:147px">50.03</span><span class="t b w" style="right:47px;top:147px">13</span>
<span class="t l" style="left:983px;top:162px">卖四</span><span class="t b r" style="right:112px;top:162px">50.02</span><span class="t b w" style="right:47px;top:162px">50</span>
<span class="t l" style="left:983px;top:177px">卖三</span><span class="t b r" style="right:112px;top:177px">50.01</span><span class="t b w" style="right:47px;top:177px">17</span>
<span class="t l" style="left:983px;top:192px">卖二</span><span class="t b r" style="right:112px;top:192px">50.00</span><span class="t b w" style="right:47px;top:192px">462</span>
<span class="t l" style="left:983px;top:207px">卖一</span><span class="t b r" style="right:112px;top:207px">49.99</span><span class="t b w" style="right:47px;top:207px">8</span>
<span class="t l" style="left:983px;top:226px">买一</span><span class="t b r" style="right:112px;top:226px">49.98</span><span class="t b w" style="right:47px;top:226px">128</span>
<span class="t l" style="left:983px;top:241px">买二</span><span class="t b r" style="right:112px;top:241px">49.97</span><span class="t b w" style="right:47px;top:241px">19</span>
<span class="t l" style="left:983px;top:256px">买三</span><span class="t b r" style="right:112px;top:256px">49.96</span><span class="t b w" style="right:47px;top:256px">13</span>
<span class="t l" style="left:983px;top:271px">买四</span><span class="t b r" style="right:112px;top:271px">49.95</span><span class="t b w" style="right:47px;top:271px">6</span>
<span class="t l" style="left:983px;top:286px">买五</span><span class="t b r" style="right:112px;top:286px">49.94</span><span class="t b w" style="right:47px;top:286px">7</span>

<!-- stats -->
<span class="t l" style="left:983px;top:307px">最新</span><span class="t b r" style="right:112px;top:307px">49.99</span><span class="t l" style="left:1092px;top:307px">均价</span><span class="t b r" style="right:9px;top:307px">49.48</span>
<span class="t l" style="left:983px;top:325px">涨幅</span><span class="t b r" style="right:112px;top:325px">+5.31%</span><span class="t l" style="left:1092px;top:325px">涨跌</span><span class="t b r" style="right:9px;top:325px">▲2.52</span>
<span class="t l" style="left:983px;top:343px">总手</span><span class="t b w" style="right:112px;top:343px">7.20万</span><span class="t l" style="left:1092px;top:343px">金额</span><span class="t b c" style="right:9px;top:343px">3.56亿</span>
<span class="t l" style="left:983px;top:361px">换手</span><span class="t b w" style="right:112px;top:361px">1.68%</span><span class="t l" style="left:1092px;top:361px">量比</span><span class="t b r" style="right:9px;top:361px">1.58</span>
<span class="t l" style="left:983px;top:379px">最高</span><span class="t b r" style="right:112px;top:379px">50.11</span><span class="t l" style="left:1092px;top:379px">最低</span><span class="t b g" style="right:9px;top:379px">47.15</span>
<span class="t l" style="left:983px;top:397px">今开</span><span class="t b g" style="right:112px;top:397px">47.43</span><span class="t l" style="left:1092px;top:397px">昨收</span><span class="t b w" style="right:9px;top:397px">47.47</span>
<span class="t l" style="left:983px;top:415px">涨停</span><span class="t b r" style="right:112px;top:415px">52.22</span><span class="t l" style="left:1092px;top:415px">跌停</span><span class="t b g" style="right:9px;top:415px">42.72</span>
<span class="t l" style="left:983px;top:433px">外盘</span><span class="t b r" style="right:112px;top:433px">4.51万</span><span class="t l" style="left:1092px;top:433px">内盘</span><span class="t b g" style="right:9px;top:433px">2.68万</span>
<span class="t l" style="left:983px;top:451px">净资产</span><span class="t b w" style="right:112px;top:451px">7.35</span><span class="t" style="left:1092px;top:451px;font-family:'Liberation Serif';font-size:12px;color:#777">ROE</span><span class="t b w" style="right:9px;top:451px">5.92%</span>
<span class="t l" style="left:983px;top:469px">收益㈡</span><span class="t b w" style="right:112px;top:469px">0.431</span><span class="t l" style="left:1092px;top:469px;font-size:13px">PE(动)</span><span class="t b w" style="right:9px;top:469px">58.01</span>
<span class="t l" style="left:983px;top:487px">总股本</span><span class="t b w" style="right:112px;top:487px">4.290亿</span><span class="t l" style="left:1092px;top:487px">总值</span><span class="t b w" style="right:9px;top:487px">214.5亿</span>
<span class="t l" style="left:983px;top:505px">流通股</span><span class="t b w" style="right:112px;top:505px">4.289亿</span><span class="t l" style="left:1092px;top:505px">流值</span><span class="t b w" style="right:9px;top:505px">214.4亿</span>

<!-- trades -->
<span class="t b" style="left:983px;top:534px;color:#999">14:56</span><span class="t b r" style="left:1044px;top:534px">49.99</span><span class="t b g" style="right:47px;top:534px">9</span><span class="t b w" style="right:12px;top:534px">2</span>
<span class="t" style="left:1003px;top:554px;font-size:11px;color:#777">:09</span><span class="t b r" style="left:1044px;top:554px">50.00</span><span class="t b r" style="right:47px;top:554px">12</span><span class="t b w" style="right:12px;top:554px">2</span>
<span class="t" style="left:1003px;top:574px;font-size:11px;color:#777">:15</span><span class="t b r" style="left:1044px;top:574px">50.00</span><span class="t b r" style="right:47px;top:574px">47</span><span class="t b w" style="right:12px;top:574px">7</span>
<span class="t" style="left:1003px;top:594px;font-size:11px;color:#777">:18</span><span class="t b r" style="left:1044px;top:594px">50.00</span><span class="t b r" style="right:47px;top:594px">115</span><span class="t b w" style="right:12px;top:594px">24</span>
<span class="t" style="left:1003px;top:614px;font-size:11px;color:#777">:21</span><span class="t b r" style="left:1044px;top:614px">49.98</span><span class="t b g" style="right:47px;top:614px">187</span><span class="t b w" style="right:12px;top:614px">19</span>
<span class="t" style="left:1003px;top:634px;font-size:11px;color:#777">:24</span><span class="t b r" style="left:1044px;top:634px">49.98</span><span class="t b r" style="right:47px;top:634px">17</span><span class="t b w" style="right:12px;top:634px">1</span>
<span class="t" style="left:1003px;top:654px;font-size:11px;color:#777">:27</span><span class="t b r" style="left:1044px;top:654px">50.00</span><span class="t b r" style="right:47px;top:654px">84</span><span class="t b w" style="right:12px;top:654px">11</span>
<span class="t" style="left:1003px;top:674px;font-size:11px;color:#777">:33</span><span class="t b r" style="left:1044px;top:674px">49.98</span><span class="t b g" style="right:47px;top:674px">14</span><span class="t b w" style="right:12px;top:674px">5</span>
<span class="t" style="left:1003px;top:694px;font-size:11px;color:#777">:39</span><span class="t b r" style="left:1044px;top:694px">50.00</span><span class="t b r" style="right:47px;top:694px">27</span><span class="t b w" style="right:12px;top:694px">6</span>
<span class="t" style="left:1003px;top:714px;font-size:11px;color:#777">:42</span><span class="t b r" style="left:1044px;top:714px">50.00</span><span class="t b r" style="right:47px;top:714px">3</span><span class="t b w" style="right:12px;top:714px">2</span>
<span class="t" style="left:1003px;top:734px;font-size:11px;color:#777">:45</span><span class="t b r" style="left:1044px;top:734px">50.00</span><span class="t b r" style="right:47px;top:734px">1</span><span class="t b w" style="right:12px;top:734px">1</span>
<span class="t" style="left:1003px;top:754px;font-size:11px;color:#777">:48</span><span class="t b r" style="left:1044px;top:754px">49.99</span><span class="t b g" style="right:47px;top:754px">9</span><span class="t b w" style="right:12px;top:754px">5</span>
<span class="t" style="left:1003px;top:774px;font-size:11px;color:#777">:51</span><span class="t b r" style="left:1044px;top:774px">49.99</span><span class="t b g" style="right:47px;top:774px">49</span><span class="t b w" style="right:12px;top:774px">8</span>
<span class="t" style="left:1003px;top:794px;font-size:11px;color:#777">:54</span><span class="t b r" style="left:1044px;top:794px">50.00</span><span class="t b r" style="right:47px;top:794px">29</span><span class="t b w" style="right:12px;top:794px">14</span>
<span class="t b" style="left:983px;top:814px;color:#999">14:57</span><span class="t b r" style="left:1044px;top:814px">49.98</span><span class="t b g" style="right:47px;top:814px">199</span><span class="t b w" style="right:12px;top:814px">20</span>
</div></body></html>
